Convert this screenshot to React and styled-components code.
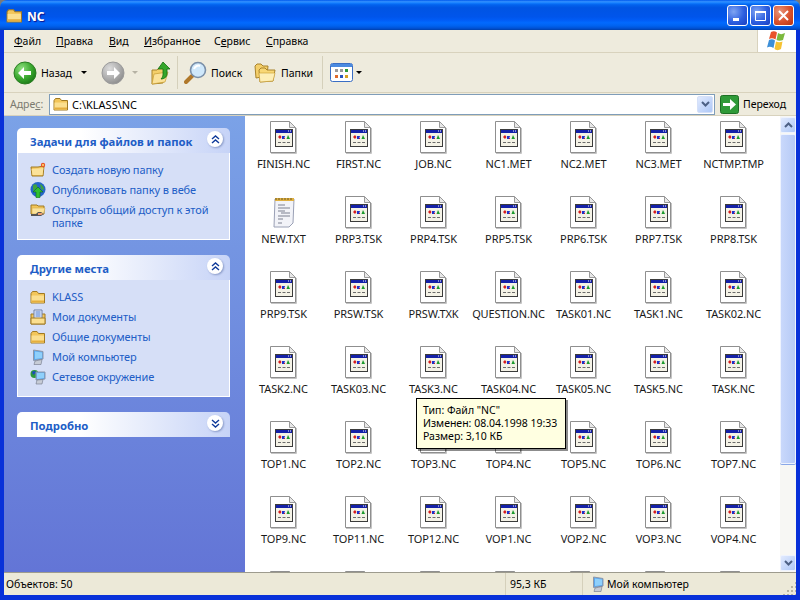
import styled, { createGlobalStyle } from "styled-components";

const FONT = `"Noto Sans", "Liberation Sans", sans-serif`;

const FILE_ROWS = [
  ["FINISH.NC", "FIRST.NC", "JOB.NC", "NC1.MET", "NC2.MET", "NC3.MET", "NCTMP.TMP"],
  ["NEW.TXT", "PRP3.TSK", "PRP4.TSK", "PRP5.TSK", "PRP6.TSK", "PRP7.TSK", "PRP8.TSK"],
  ["PRP9.TSK", "PRSW.TSK", "PRSW.TXK", "QUESTION.NC", "TASK01.NC", "TASK1.NC", "TASK02.NC"],
  ["TASK2.NC", "TASK03.NC", "TASK3.NC", "TASK04.NC", "TASK05.NC", "TASK5.NC", "TASK.NC"],
  ["TOP1.NC", "TOP2.NC", "TOP3.NC", "TOP4.NC", "TOP5.NC", "TOP6.NC", "TOP7.NC"],
  ["TOP9.NC", "TOP11.NC", "TOP12.NC", "VOP1.NC", "VOP2.NC", "VOP3.NC", "VOP4.NC"],
];

// the next row only shows the tops of its icons above the status bar
const CLIPPED_ICONS = [1, 2, 3, 4, 5, 6, 7];

const GlobalStyle = createGlobalStyle`
  html, body {
    margin: 0;
    padding: 0;
    background: #7a7a7a;
  }
  * {
    box-sizing: border-box;
  }
  svg {
    flex: none;
  }
`;

const Window = styled.div`
  width: 800px;
  height: 600px;
  display: flex;
  flex-direction: column;
  overflow: hidden;
  font-family: ${FONT};
  font-size: 11px;
  color: #000;
`;

const TitleBar = styled.div`
  height: 30px;
  flex: none;
  display: flex;
  align-items: center;
  padding: 0 6px 0 6px;
  border-radius: 7px 7px 0 0;
  background: linear-gradient(
    180deg,
    #0058ee 0%,
    #3593ff 6%,
    #127dff 10%,
    #0262ee 16%,
    #0054e3 26%,
    #0055eb 56%,
    #005bf5 66%,
    #026afe 76%,
    #0062ef 86%,
    #0052d6 94%,
    #0040ab 100%
  );
`;

const TitleText = styled.span`
  margin-left: 4px;
  padding-top: 3px;
  flex: 1;
  color: #fff;
  font-size: 12px;
  font-weight: 700;
  text-shadow: 1px 1px 1px #0f1089;
`;

const CaptionButton = styled.div`
  width: 21px;
  height: 21px;
  margin-left: 2px;
  display: flex;
  align-items: center;
  justify-content: center;
  border: 1px solid #fff;
  border-radius: 3px;
  background: ${(p) =>
    p.$close
      ? "radial-gradient(circle at 30% 30%, #e8967c, #d9512c 55%, #b8330f)"
      : "radial-gradient(circle at 30% 30%, #7fa4f2, #2d5fe0 55%, #1a3fc0)"};
`;

const Frame = styled.div`
  flex: 1;
  min-height: 0;
  display: flex;
  flex-direction: column;
  border: solid #0831d9;
  border-width: 0 4px 5px 4px;
  background: #ece9d8;
`;

const MenuBar = styled.div`
  height: 23px;
  flex: none;
  display: flex;
  align-items: stretch;
  padding-left: 10px;
  border-bottom: 1px solid #d8d2bd;
  background: #eeebdd;
`;

const MenuItem = styled.span`
  width: ${(p) => p.$w}px;
  align-self: center;
  font-size: 10.5px;
`;

const LogoBox = styled.div`
  margin-left: auto;
  width: 39px;
  display: flex;
  align-items: center;
  justify-content: center;
  background: #fff;
  border-left: 1px solid #d8d2bd;
`;

const Toolbar = styled.div`
  height: 40px;
  flex: none;
  display: flex;
  align-items: center;
  padding-left: 9px;
  border-bottom: 1px solid #d8d2bd;
  background: #eeebdd;
`;

const ToolSlot = styled.div`
  flex: none;
  display: flex;
  margin-left: ${(p) => p.$gap || 0}px;
  width: ${(p) => (p.$w ? `${p.$w}px` : "auto")};
  font-size: 10.5px;
`;

const ToolDivider = styled.div`
  flex: none;
  width: 1px;
  height: 33px;
  margin-left: ${(p) => p.$gap}px;
  background: #d5d0bb;
`;

const Caret = styled.div`
  flex: none;
  margin-left: ${(p) => p.$gap}px;
  width: 0;
  height: 0;
  border: 3px solid transparent;
  border-top: 3px solid ${(p) => (p.$off ? "#b5b2a4" : "#000")};
  border-bottom: 0;
`;

const AddressBar = styled.div`
  height: 23px;
  flex: none;
  display: flex;
  align-items: center;
  padding-left: 6px;
  border-bottom: 1px solid #d8d2bd;
  background: #eeebdd;
  font-size: 10.5px;
`;

const AddressLabel = styled.span`
  width: 39px;
  color: #7b7a70;
`;

const AddressField = styled.div`
  width: 666px;
  height: 21px;
  display: flex;
  align-items: center;
  padding: 0 1px 0 3px;
  border: 1px solid #7f9db9;
  background: #fff;
`;

const AddressText = styled.span`
  margin-left: 3px;
  flex: 1;
  font-size: 11px;
`;

const ComboButton = styled.div`
  width: 16px;
  height: 17px;
  display: flex;
  align-items: center;
  justify-content: center;
  border: 1px solid #d5e0f8;
  border-radius: 2px;
  background: linear-gradient(135deg, #e1eafe, #aec8f7);
`;

const GoButton = styled.div`
  margin-left: 5px;
  display: flex;
  align-items: center;
  gap: 4px;
`;

const Content = styled.div`
  flex: 1;
  min-height: 0;
  display: flex;
  border-bottom: 1px solid #9d9b8e;
`;

const Sidebar = styled.aside`
  width: 241px;
  flex: none;
  display: flex;
  flex-direction: column;
  gap: 15px;
  padding: 12px 15px 0 13px;
  background: linear-gradient(180deg, #7ba2e7, #6375d6);
`;

const Panel = styled.section`
  display: flex;
  flex-direction: column;
`;

const PanelHeader = styled.div`
  height: 25px;
  display: flex;
  justify-content: space-between;
  padding: 3px 7px 0 13px;
  border-radius: 5px 5px 0 0;
  background: linear-gradient(90deg, #fff 30%, #c6d3f7);
`;

const PanelTitle = styled.span`
  margin-top: 3px;
  color: #215dc6;
  font-size: 11.3px;
  font-weight: 700;
`;

const Chevron = styled.div`
  width: 16px;
  height: 16px;
  display: flex;
  align-items: center;
  justify-content: center;
  border-radius: 50%;
  background: #fff;
  box-shadow: 1px 1px 2px #8a9bc8;
`;

const PanelBody = styled.div`
  display: flex;
  flex-direction: column;
  padding: 7px 10px 9px 12px;
  border: 1px solid #fff;
  border-top: 0;
  background: #d6dff7;
`;

const TaskRow = styled.div`
  min-height: 20px;
  display: flex;
  align-items: flex-start;
  gap: 6px;
  padding-top: 2px;
`;

const TaskLink = styled.span`
  margin-top: 1px;
  padding-bottom: 1px;
  color: #215dc6;
  line-height: 13px;
  letter-spacing: -0.1px;
`;

const FilePane = styled.div`
  position: relative;
  flex: 1;
  min-width: 0;
  display: flex;
  background: #fff;
`;

const FileGrid = styled.div`
  flex: 1;
  display: grid;
  grid-template-columns: repeat(7, 75px);
  grid-auto-rows: 75px;
  align-content: start;
  padding: 5px 0 0 1px;
  overflow: hidden;
`;

const FileCell = styled.div`
  display: flex;
  flex-direction: column;
  align-items: center;
`;

const FileName = styled.span`
  margin-top: 2px;
  white-space: nowrap;
  color: #1a1a1a;
  letter-spacing: -0.1px;
`;

const Tooltip = styled.div`
  position: absolute;
  left: 171px;
  top: 282px;
  width: 150px;
  height: 51px;
  padding: 5px 6px;
  font-size: 10.5px;
  line-height: 13px;
  white-space: nowrap;
  border: 1px solid #000;
  background: #ffffe1;
  box-shadow: 2px 2px 0 rgba(0, 0, 0, 0.45);
`;

const Scrollbar = styled.div`
  width: 16px;
  flex: none;
  display: flex;
  flex-direction: column;
  padding: 1px 0;
  background: #f7f7f4;
`;

const ScrollButton = styled.div`
  height: 16px;
  flex: none;
  display: flex;
  align-items: center;
  justify-content: center;
  border: 1px solid #eef3fe;
  border-radius: 2px;
  background: linear-gradient(135deg, #e1eafe, #aec8f7);
`;

const ScrollThumb = styled.div`
  height: 330px;
  margin-top: 1px;
  border: 1px solid #eef3fe;
  border-radius: 2px;
  background: linear-gradient(90deg, #c9d8fb, #b6caf6);
  box-shadow: 0 1px 0 #8aa8e8;
`;

const ScrollSpacer = styled.div`
  flex: 1;
`;

const StatusBar = styled.div`
  height: 22px;
  flex: none;
  display: flex;
  align-items: center;
  background: #ece9d8;
  font-size: 10.5px;
`;

const StatusCell = styled.div`
  height: 100%;
  width: ${(p) => p.$w}px;
  flex: ${(p) => (p.$w ? "none" : "1")};
  display: flex;
  align-items: center;
  gap: 1px;
  padding-left: ${(p) => p.$pad}px;
  border-left: ${(p) => (p.$first ? "0" : "1px solid #d5d0bb")};
`;

const Grip = styled.div`
  width: 14px;
  height: 14px;
  margin: auto 0 0 auto;
  background-image: radial-gradient(circle, #b5b2a0 1px, transparent 1.2px);
  background-size: 4px 4px;
  clip-path: polygon(100% 0, 100% 100%, 0 100%);
`;

const FileIcon = () => (
  <svg width="27" height="33" viewBox="0 0 27 33">
    <path d="M.5 .5H19.500L25.500 6.500V31.500H.5Z" fill="#fff" stroke="#8f8f8f" />
    <path d="M19.500 .5V6.500H25.500Z" fill="#e8e8e8" stroke="#9a9a9a" />
    <path d="M1 32.500H26.500V7" fill="none" stroke="#c4c4c4" />
    <rect x="5.500" y="8.500" width="17" height="17" fill="#f4f2e6" stroke="#3c3c3c" />
    <rect x="6" y="9" width="16" height="3" fill="#1420a8" />
    <path d="M18 10h1M20 10h1" stroke="#fff" />
    <path d="M8 16l2-2 1.500 2-1.500 2z" fill="#d81c1c" />
    <path d="M12 15h3l-1 3h-2z" fill="#2030c8" />
    <path d="M14 17h1v1h-1z" fill="#d81c1c" />
    <path d="M16.500 18l1.500-4 2 4z" fill="#1b9a2c" />
    <path d="M8 21h3v1H8zM12.500 21h3v1h-3zM17 21h3v1h-3z" fill="#6c6c6c" />
  </svg>
);

const NotepadIcon = () => (
  <svg width="27" height="33" viewBox="0 0 27 33">
    <path d="M5 3H24L23 27 19 31H4Z" fill="#f2f3f8" stroke="#9aa0b5" />
    <path d="M5 2h19v3H5z" fill="#e0b040" />
    <path d="M6 2v2M9 2v2M12 2v2M15 2v2M18 2v2M21 2v2" stroke="#6c5a22" />
    <path d="M8 9h7M8 12h12M8 15h7M11 17h9M8 20h12M8 23h5M8 27h4" stroke="#7c8090" />
  </svg>
);

const Folder = ({ size = 16 }) => (
  <svg width={size} height={size} viewBox="0 0 16 16">
    <path d="M1 4.500 2.500 2.500H7L8.500 4.500H14.500V14H1Z" fill="#f3c65a" stroke="#a07a24" />
    <path d="M1.500 6.500H14V13.500H1.500Z" fill="#fbdf8f" />
    <path d="M1.500 11.500H14V13.500H1.500Z" fill="#e5ae3e" />
  </svg>
);

const NewFolder = () => (
  <svg width="16" height="16" viewBox="0 0 16 16">
    <path d="M1 5H8L14 4 13 14H2Z" fill="#f3c65a" stroke="#a07a24" />
    <path d="M1.500 7 13.500 6 12.500 13H2.500Z" fill="#fbe29a" />
    <circle cx="13" cy="3" r="2.200" fill="#e8562a" />
    <circle cx="13" cy="3" r="1" fill="#ffe36e" />
  </svg>
);

const PublishIcon = () => (
  <svg width="16" height="16" viewBox="0 0 16 16">
    <circle cx="8" cy="7.500" r="7.500" fill="#2566c8" />
    <path d="M3 3c3-2 5 0 4 3L3 9ZM10 2c3 1 4 4 4 6l-3-1Z" fill="#3fa33f" />
    <path d="M8 5 13 10H10V15.500H6V10H3Z" fill="#2fc02f" stroke="#0e6b12" strokeWidth=".6" />
  </svg>
);

const ShareIcon = () => (
  <svg width="16" height="16" viewBox="0 0 16 16">
    <path d="M1 3H7L8 4H14V12H1Z" fill="#f3c65a" stroke="#a07a24" />
    <path d="M2 6H15L13.500 12H2Z" fill="#fbe29a" stroke="#c9a33e" strokeWidth=".5" />
    <path d="M1 12H6L8 10H11L14 12 11 14H1Z" fill="#555" />
    <path d="M8 11h4l1 1-2 1H8Z" fill="#f0a070" />
  </svg>
);

const DocsIcon = () => (
  <svg width="16" height="16" viewBox="0 0 16 16">
    <path d="M1 5H15V15H1Z" fill="#f3c65a" stroke="#a07a24" />
    <path d="M4 1H12V11H4Z" fill="#e8eefa" stroke="#6c7ea8" />
    <path d="M5.500 3h5M5.500 5h5M5.500 7h5" stroke="#4a7ad0" />
    <path d="M1 9H15V15H1Z" fill="#fbdf8f" stroke="#a07a24" />
  </svg>
);

const ComputerIcon = () => (
  <svg width="16" height="16" viewBox="0 0 16 16">
    <path d="M3.500 1 13 2.500V10L3.500 11.500Z" fill="#5aa8ef" stroke="#8e97a8" />
    <path d="M5 2.500 12 3.500V9L5 10Z" fill="#8fd0fb" />
    <path d="M5 12 12 10.500 11 15.500H4Z" fill="#c7ccd6" stroke="#6e7686" strokeWidth=".6" />
  </svg>
);

const NetworkIcon = () => (
  <svg width="16" height="16" viewBox="0 0 16 16">
    <circle cx="4.500" cy="5" r="4" fill="#2b9a3c" />
    <path d="M2 3c2-2 4-1 4 1L3 6Z" fill="#1c4fb8" />
    <path d="M6 3 15 3V10L6 11Z" fill="#5aa8ef" stroke="#8e97a8" />
    <path d="M7 4 14 4V9L7 10Z" fill="#8fd0fb" />
    <path d="M7 11 13 10.500 12 15H6Z" fill="#c7ccd6" stroke="#6e7686" strokeWidth=".6" />
  </svg>
);

const BackIcon = ({ off, flip }) => {
  const id = off ? "offBall" : "greenBall";
  return (
    <svg width="24" height="24" viewBox="0 0 24 24">
      <defs>
        <radialGradient id={id} cx="35%" cy="30%" r="75%">
          <stop offset="0" stopColor={off ? "#dcdcdc" : "#8fe07f"} />
          <stop offset="0.6" stopColor={off ? "#aeaeae" : "#3aa82e"} />
          <stop offset="1" stopColor={off ? "#8c8c8c" : "#1c7a18"} />
        </radialGradient>
      </defs>
      <circle cx="12" cy="12" r="11" fill={`url(#${id})`} stroke={off ? "#9a9a9a" : "#2a7d22"} />
      <path
        d="M5 12 11 6V10H18V14H11V18Z"
        fill="#fff"
        transform={flip ? "rotate(180 12 12)" : undefined}
      />
    </svg>
  );
};

const UpIcon = () => (
  <svg width="20" height="24" viewBox="0 0 20 24">
    <path d="M1 9H6L8 7H13L12 22 1 23Z" fill="#f4cf6a" stroke="#a8832c" />
    <path d="M3 13 17 11 14 21 1 23Z" fill="#fbe29a" stroke="#c79c30" strokeWidth=".7" />
    <path d="M12 1 19 8H16V13C16 16 13 18 10 18 12 16 12 14 12 13V8H7Z" fill="#35a62b" stroke="#136f12" strokeWidth=".8" />
  </svg>
);

const SearchIcon = () => (
  <svg width="24" height="24" viewBox="0 0 24 24">
    <path d="M8 15 2 21" stroke="#b0782a" strokeWidth="4" strokeLinecap="round" />
    <circle cx="14" cy="9" r="7.500" fill="#cfe8fb" stroke="#7a8fa8" strokeWidth="1.600" />
    <path d="M10 8c1-3 4-4 6-3" stroke="#fff" strokeWidth="2" fill="none" />
  </svg>
);

const FoldersIcon = () => (
  <svg width="22" height="20" viewBox="0 0 22 20">
    <path d="M1 3 3 1H7L9 3H14L13 13 2 15Z" fill="#f4cf6a" stroke="#a8832c" />
    <path d="M5 7 7 5H11L13 7H21L19 18 6 19Z" fill="#f8d775" stroke="#a8832c" />
    <path d="M5 10H21L19 18 6 19Z" fill="#fdeeb6" stroke="#c79c30" strokeWidth=".6" />
  </svg>
);

const ViewsIcon = () => (
  <svg width="23" height="19" viewBox="0 0 23 19">
    <rect x=".5" y=".5" width="22" height="18" rx="2" fill="#fff" stroke="#3a6ec4" />
    <rect x="1" y="1" width="21" height="3" fill="#4a8ae0" />
    <path d="M5 6h3v3H5z" fill="#9a9a9a" />
    <path d="M10 6h3v3h-3z" fill="#9a9a9a" />
    <path d="M15 6h3v3h-3z" fill="#2e9a3a" />
    <path d="M5 12h3v3H5z" fill="#e06a2a" />
    <path d="M10 12h3v3h-3z" fill="#2a56c0" />
    <path d="M15 12h3v3h-3z" fill="#d8a020" />
  </svg>
);

const XpFlag = () => (
  <svg width="22" height="20" viewBox="0 0 22 20">
    <path d="M5 1c2-1 4-1 6 .5L9.500 8.500C7 7 5 7 3 8Z" fill="#e8532a" />
    <path d="M12 2c2 1.500 4 1.500 7 0L17 9c-2 1-5 1-6.500 0Z" fill="#7cb93e" />
    <path d="M3 9c2-1 4-1 6 .5L7.500 17C5 15.500 3 15.500 1 16.500Z" fill="#3d8fd8" />
    <path d="M10 10.500c2 1 4.500 1 6.500 0L15 18c-2 1.500-5 1.500-6.500 0Z" fill="#f6c233" />
  </svg>
);

const GoIcon = () => (
  <svg width="19" height="19" viewBox="0 0 19 19">
    <rect x=".5" y=".5" width="18" height="18" rx="2" fill="#2f9a38" stroke="#1d6f24" />
    <path d="M3 8H10V4L16 9.500 10 15V11H3Z" fill="#fff" />
  </svg>
);

const DoubleChevron = ({ down, color = "#215dc6" }) => (
  <svg width="9" height="9" viewBox="0 0 9 9">
    <path
      d={down ? "M1 1 4.500 4 8 1M1 5 4.500 8 8 5" : "M1 4 4.500 1 8 4M1 8 4.500 5 8 8"}
      fill="none"
      stroke={color}
      strokeWidth="1.400"
    />
  </svg>
);

const ScrollArrow = ({ down }) => (
  <svg width="9" height="6" viewBox="0 0 9 6">
    <path d={down ? "M1 1 4.500 4.500 8 1" : "M1 5 4.500 1.500 8 5"} fill="none" stroke="#4d6185" strokeWidth="2" />
  </svg>
);

const SidebarPanel = ({ title, collapsed, children }) => (
  <Panel>
    <PanelHeader>
      <PanelTitle>{title}</PanelTitle>
      <Chevron>
        <DoubleChevron down={collapsed} color="#0f3a9a" />
      </Chevron>
    </PanelHeader>
    {children && <PanelBody>{children}</PanelBody>}
  </Panel>
);

const Task = ({ icon, children }) => (
  <TaskRow>
    {icon}
    <TaskLink>{children}</TaskLink>
  </TaskRow>
);

const App = () => (
  <Window>
    <GlobalStyle />
    <TitleBar>
      <Folder size={17} />
      <TitleText>NC</TitleText>
      <CaptionButton>
        <svg width="11" height="11" viewBox="0 0 11 11">
          <rect x="1" y="8" width="6" height="3" fill="#fff" />
        </svg>
      </CaptionButton>
      <CaptionButton>
        <svg width="11" height="11" viewBox="0 0 11 11">
          <path d="M.5 2.500h10v8H.5z" fill="none" stroke="#fff" />
          <rect width="11" height="2" y="1" fill="#fff" />
        </svg>
      </CaptionButton>
      <CaptionButton $close>
        <svg width="11" height="11" viewBox="0 0 11 11">
          <path d="M1 1 10 10M10 1 1 10" stroke="#fff" strokeWidth="2" />
        </svg>
      </CaptionButton>
    </TitleBar>
    <Frame>
      <MenuBar>
        <MenuItem $w={42}><u>Ф</u>айл</MenuItem>
        <MenuItem $w={53}><u>П</u>равка</MenuItem>
        <MenuItem $w={35}><u>В</u>ид</MenuItem>
        <MenuItem $w={70}><u>И</u>збранное</MenuItem>
        <MenuItem $w={52}>С<u>е</u>рвис</MenuItem>
        <MenuItem $w={60}><u>С</u>правка</MenuItem>
        <LogoBox>
          <XpFlag />
        </LogoBox>
      </MenuBar>
      <Toolbar>
        <BackIcon />
        <ToolSlot $gap={4} $w={30}>Назад</ToolSlot>
        <Caret $gap={10} />
        <ToolSlot $gap={14}>
          <BackIcon off flip />
        </ToolSlot>
        <Caret $gap={7} $off />
        <ToolSlot $gap={13}>
          <UpIcon />
        </ToolSlot>
        <ToolDivider $gap={6} />
        <ToolSlot $gap={6}>
          <SearchIcon />
        </ToolSlot>
        <ToolSlot $gap={3} $w={30}>Поиск</ToolSlot>
        <ToolSlot $gap={13}>
          <FoldersIcon />
        </ToolSlot>
        <ToolSlot $gap={5} $w={30}>Папки</ToolSlot>
        <ToolDivider $gap={11} />
        <ToolSlot $gap={7}>
          <ViewsIcon />
        </ToolSlot>
        <Caret $gap={3} />
      </Toolbar>
      <AddressBar>
        <AddressLabel>Адре<u>с</u>:</AddressLabel>
        <AddressField>
          <Folder />
          <AddressText>C:\KLASS\NC</AddressText>
          <ComboButton>
            <ScrollArrow down />
          </ComboButton>
        </AddressField>
        <GoButton>
          <GoIcon />
          <span>Переход</span>
        </GoButton>
      </AddressBar>
      <Content>
        <Sidebar>
          <SidebarPanel title="Задачи для файлов и папок">
            <Task icon={<NewFolder />}>Создать новую папку</Task>
            <Task icon={<PublishIcon />}>Опубликовать папку в вебе</Task>
            <Task icon={<ShareIcon />}>Открыть общий доступ к этой папке</Task>
          </SidebarPanel>
          <SidebarPanel title="Другие места">
            <Task icon={<Folder />}>KLASS</Task>
            <Task icon={<DocsIcon />}>Мои документы</Task>
            <Task icon={<Folder />}>Общие документы</Task>
            <Task icon={<ComputerIcon />}>Мой компьютер</Task>
            <Task icon={<NetworkIcon />}>Сетевое окружение</Task>
          </SidebarPanel>
          <SidebarPanel title="Подробно" collapsed />
        </Sidebar>
        <FilePane>
          <FileGrid>
            {FILE_ROWS.flat().map((name) => (
              <FileCell key={name}>
                {name === "NEW.TXT" ? <NotepadIcon /> : <FileIcon />}
                <FileName>{name}</FileName>
              </FileCell>
            ))}
            {CLIPPED_ICONS.map((id) => (
              <FileCell key={id}>
                <FileIcon />
              </FileCell>
            ))}
          </FileGrid>
          <Scrollbar>
            <ScrollButton>
              <ScrollArrow />
            </ScrollButton>
            <ScrollThumb />
            <ScrollSpacer />
            <ScrollButton>
              <ScrollArrow down />
            </ScrollButton>
          </Scrollbar>
          <Tooltip>
            Тип: Файл "NC"
            <br />
            Изменен: 08.04.1998 19:33
            <br />
            Размер: 3,10 КБ
          </Tooltip>
        </FilePane>
      </Content>
      <StatusBar>
        <StatusCell $w={501} $pad={2} $first>Объектов: 50</StatusCell>
        <StatusCell $w={77} $pad={4}>95,3 КБ</StatusCell>
        <StatusCell $pad={7}>
          <ComputerIcon />
          Мой компьютер
          <Grip />
        </StatusCell>
      </StatusBar>
    </Frame>
  </Window>
);

export default App;
